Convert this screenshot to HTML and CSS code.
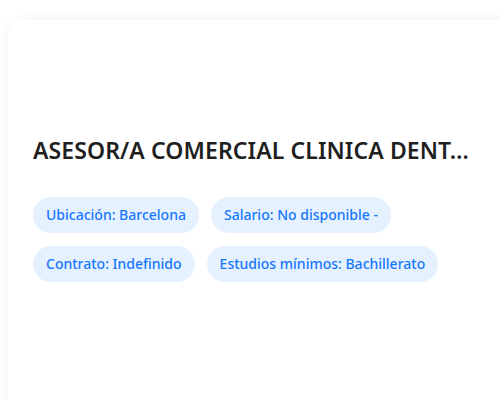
FILE: index.html
```html
<!DOCTYPE html>
<html lang="es">
<head>
  <meta charset="UTF-8">
  <meta name="viewport" content="width=device-width, initial-scale=1.0">
  <title>Oferta de empleo</title>
  <link rel="stylesheet" href="styles.css">
</head>
<body>
  <div class="job-card">
    <h2 class="job-title">ASESOR/A COMERCIAL CLINICA DENTAL BARCELONA</h2>

    <div class="job-tags">
      <span class="tag">Ubicación: Barcelona</span>
      <span class="tag">Salario: No disponible -</span>
      <span class="tag">Contrato: Indefinido</span>
      <span class="tag">Estudios mínimos: Bachillerato</span>
    </div>
  </div>
</body>
</html>
```

FILE: styles.css
```css
* {
  box-sizing: border-box;
}

html,
body {
  height: 100%;
  overflow: hidden;
}

body {
  margin: 0;
  padding: 20px 0 0 8px;
  background: #fff;
  font-family: 'Noto Sans', 'Open Sans', sans-serif;
}

.job-card {
  width: 510px;
  min-height: 420px;
  padding: 116px 25px 25px;
  background: #fff;
  border-radius: 14px;
  box-shadow: 0 0 12px rgba(0, 0, 0, 0.06);
}

.job-title {
  width: 436px;
  margin: 0 0 31px;
  font-size: 23px;
  font-weight: 600;
  line-height: 1.3;
  letter-spacing: 0.1px;
  color: #1f1f1f;
  white-space: nowrap;
  overflow: hidden;
  text-overflow: ellipsis;
}

.job-tags {
  display: flex;
  flex-wrap: wrap;
  gap: 13px 12px;
  width: 420px;
}

.tag {
  display: inline-block;
  padding: 0 13px;
  height: 36px;
  line-height: 36px;
  border-radius: 18px;
  background: #e6f1ff;
  color: #1677ff;
  font-size: 14px;
  font-weight: 500;
}
```
